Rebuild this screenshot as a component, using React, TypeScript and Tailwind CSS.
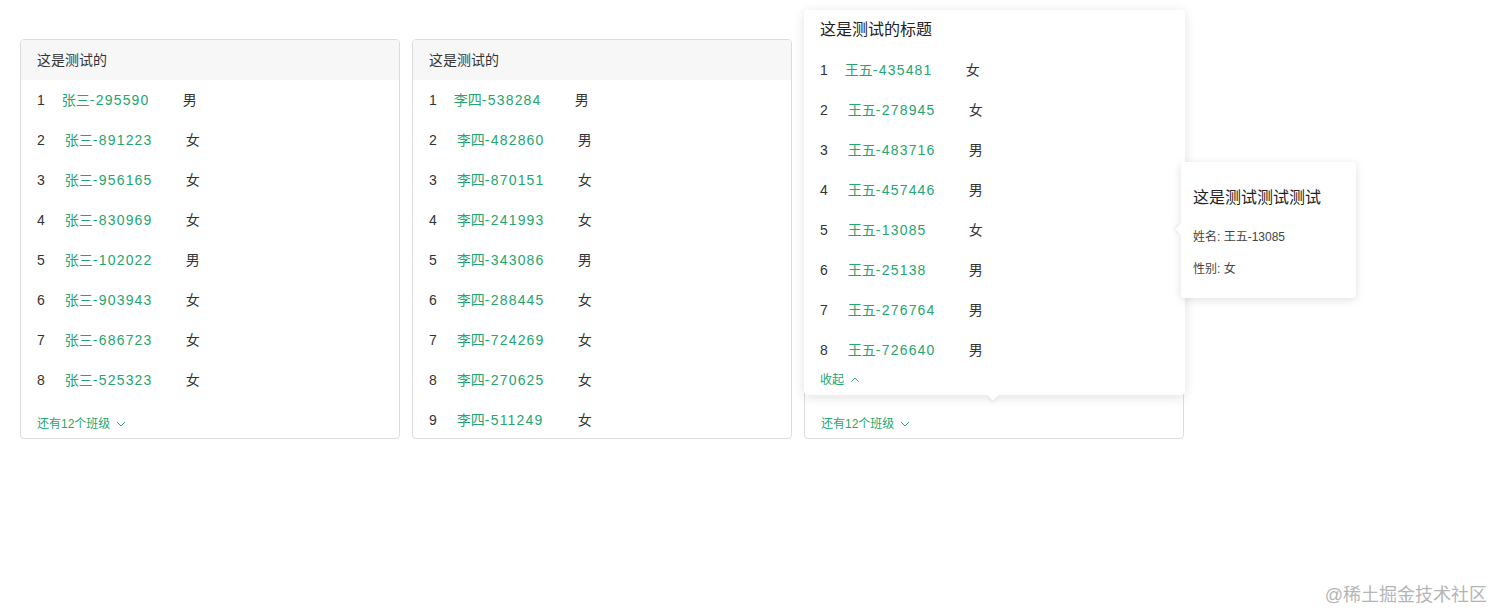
import React from "react";

type Row = { n: number; pre: string; id: string; g: string };

const card1: Row[] = [
  ["295590", "男"], ["891223", "女"], ["956165", "女"], ["830969", "女"],
  ["102022", "男"], ["903943", "女"], ["686723", "女"], ["525323", "女"],
].map(([id, g], i) => ({ n: i + 1, pre: "张三", id, g }));

const card2: Row[] = [
  ["538284", "男"], ["482860", "男"], ["870151", "女"], ["241993", "女"],
  ["343086", "男"], ["288445", "女"], ["724269", "女"], ["270625", "女"], ["511249", "女"],
].map(([id, g], i) => ({ n: i + 1, pre: "李四", id, g }));

const card3: Row[] = [
  ["435481", "女"], ["278945", "女"], ["483716", "男"], ["457446", "男"],
  ["13085", "女"], ["25138", "男"], ["276764", "男"], ["726640", "男"],
].map(([id, g], i) => ({ n: i + 1, pre: "王五", id, g }));

const font = { fontFamily: '"Liberation Sans", "Noto Sans CJK SC", sans-serif' };

function Chevron({ up = false }: { up?: boolean }) {
  return (
    <svg width="10" height="10" viewBox="0 0 10 10" className="ml-[6px]" fill="none">
      <path
        d={up ? "M1.5 6.5 L5 3 L8.5 6.5" : "M1.5 3.5 L5 7 L8.5 3.5"}
        stroke="#25a56f"
        strokeWidth="1"
        strokeLinecap="round"
        strokeLinejoin="round"
      />
    </svg>
  );
}

function ListRow({ r }: { r: Row }) {
  return (
    <div className="flex h-[40px] items-center text-[14px] text-[#333]">
      <span className={r.n === 1 ? "mr-[17px]" : "mr-[20px]"}>{r.n}</span>
      <span className="w-[121px] text-[#25a56f]">
        {r.pre}
        <span className="tracking-[1.2px]">-{r.id}</span>
      </span>
      <span>{r.g}</span>
    </div>
  );
}

function Footer() {
  return (
    <div className="flex items-center pt-[16px] text-[12px] leading-[16px] text-[#25a56f]">
      还有12个班级
      <Chevron />
    </div>
  );
}

function Card({ rows, footer }: { rows: Row[]; footer: boolean }) {
  return (
    <div className="h-[400px] w-[380px] shrink-0 overflow-hidden rounded-[4px] border border-[#dcdcdc] bg-white">
      <div className="flex h-[40px] items-center bg-[#f7f7f7] px-[16px] text-[14px] text-[#333]">这是测试的</div>
      <div className="px-[16px]">
        {rows.map((r) => (
          <ListRow key={r.n} r={r} />
        ))}
        {footer && <Footer />}
      </div>
    </div>
  );
}

export default function App() {
  return (
    <div className="relative h-[612px] w-full overflow-hidden bg-white" style={font}>
      <div className="flex items-start gap-[12px] pl-[20px] pt-[39px]">
        <Card rows={card1} footer />
        <Card rows={card2} footer={false} />
        <div className="relative h-[400px] w-[380px] shrink-0 rounded-[4px] border border-[#dcdcdc] bg-white">
          <div className="absolute bottom-[6px] left-[16px]">
            <Footer />
          </div>
          {/* popover */}
          <div className="absolute left-[-1px] top-[-30px] z-10 w-[381px] rounded-[4px] bg-white px-[16px] pb-[7px] pt-[10px] shadow-[0_2px_12px_rgba(0,0,0,0.12)]">
            <div className="text-[16px] leading-[20px] text-[#222]">这是测试的标题</div>
            <div className="pt-[10px]">
              {card3.map((r) => (
                <ListRow key={r.n} r={r} />
              ))}
            </div>
            <div className="mt-[2px] flex items-center text-[12px] leading-[16px] text-[#25a56f]">
              收起
              <Chevron up />
            </div>
            <div className="absolute bottom-[-4px] left-[185px] h-[8px] w-[8px] rotate-45 bg-white shadow-[2px_2px_3px_rgba(0,0,0,0.06)]" />
          </div>
          {/* tooltip */}
          <div className="absolute left-[376px] top-[122px] z-20 h-[136px] w-[175px] rounded-[4px] bg-white px-[12px] pt-[26px] shadow-[0_2px_10px_rgba(0,0,0,0.12)]">
            <div className="absolute left-[-4px] top-[63px] h-[8px] w-[8px] rotate-45 bg-white shadow-[-2px_2px_3px_rgba(0,0,0,0.05)]" />
            <div className="text-[16px] leading-[20px] text-[#222]">这是测试测试测试</div>
            <div className="mt-[22px] text-[12px] leading-[14px] text-[#444]">姓名: 王五-13085</div>
            <div className="mt-[18px] text-[12px] leading-[14px] text-[#444]">性别: 女</div>
          </div>
        </div>
      </div>
      <div className="absolute bottom-[6px] right-[6px] text-[18px] leading-[22px] text-[#b5b5b5]">@稀土掘金技术社区</div>
    </div>
  );
}
